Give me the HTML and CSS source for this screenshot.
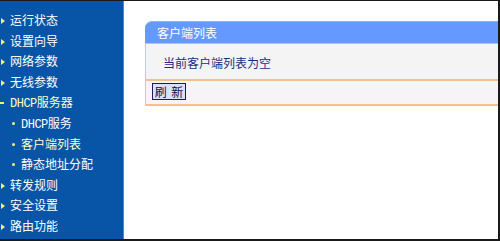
FILE: index.html
```html
<!DOCTYPE html>
<html lang="zh">
<head>
<meta charset="utf-8">
<title>客户端列表</title>
<link rel="stylesheet" href="styles.css">
</head>
<body>
<div class="frame">
  <nav class="sidebar">
    <div class="item top">运行状态</div>
    <div class="item top">设置向导</div>
    <div class="item top">网络参数</div>
    <div class="item top">无线参数</div>
    <div class="item open hl"><span class="latin">DHCP</span>服务器</div>
    <div class="item sub"><span class="latin">DHCP</span>服务</div>
    <div class="item sub hl">客户端列表</div>
    <div class="item sub">静态地址分配</div>
    <div class="item top">转发规则</div>
    <div class="item top">安全设置</div>
    <div class="item top">路由功能</div>
  </nav>
  <main class="main">
    <section class="panel">
      <div class="panel-head">客户端列表</div>
      <div class="panel-body">当前客户端列表为空</div>
      <div class="panel-foot"><button class="btn" type="button">刷 新</button></div>
    </section>
  </main>
</div>
</body>
</html>
```
FILE: styles.css
```css
* { box-sizing: border-box; }
html, body { margin: 0; padding: 0; background: #ffffff; }
body { font-family: "Noto Sans CJK SC", "DejaVu Sans", sans-serif; font-size: 12px; }

.frame {
  width: 500px;
  height: 241px;
  display: flex;
  border-top: 1px solid #1a1a1a;
  border-right: 2px solid #1a1a1a;
  border-bottom: 2px solid #1a1a1a;
  overflow: hidden;
}

.sidebar {
  width: 124px;
  flex: none;
  background: #0854a6;
  border-right: 1px solid #4f86c8;
  padding-top: 9px;
  display: flex;
  flex-direction: column;
}

.item {
  height: 20.6px;
  line-height: 20.6px;
  color: #ffffff;
  font-size: 12px;
  position: relative;
  padding-left: 10px;
  white-space: nowrap;
}
.item.hl { color: #ffffcc; }
.item .latin { font-family: "Liberation Mono", "DejaVu Sans Mono", monospace; font-size: 12px; letter-spacing: -0.5px; }

.item.top::before {
  content: "";
  position: absolute;
  left: 1px;
  top: 8px;
  border-left: 4px solid #f6f07a;
  border-top: 3px solid transparent;
  border-bottom: 3px solid transparent;
}
.item.open::before {
  content: "";
  position: absolute;
  left: 0;
  top: 10px;
  width: 4px;
  height: 2px;
  background: #f6f07a;
}
.item.sub { padding-left: 21px; }
.item.sub::before {
  content: "";
  position: absolute;
  left: 12px;
  top: 9px;
  width: 3px;
  height: 3px;
  border-radius: 50%;
  background: #f6f07a;
}

.main {
  flex: 1;
  padding: 20px 0 0 21px;
  overflow: hidden;
}

.panel { width: 420px; }

.panel-head {
  height: 22px;
  line-height: 21px;
  background: #6699ff;
  border-top: 1px solid #8fb4ff;
  border-top-left-radius: 7px;
  color: #ffffff;
  padding-left: 12px;
  font-size: 12px;
}

.panel-body {
  height: 38px;
  line-height: 38px;
  background: #f4f4f4;
  border-left: 1px solid #f5c08a;
  border-right: 1px solid #f5c08a;
  border-top: 1px solid #a9c4ff;
  border-bottom: 2px solid #f5c08a;
  color: #1c2c84;
  padding-left: 17px;
  font-size: 12px;
}

.panel-foot {
  height: 25px;
  background: #f6f4f6;
  border-left: 1px solid #f5c08a;
  border-right: 1px solid #f5c08a;
  border-bottom: 2px solid #f5c08a;
  padding: 2px 0 0 6px;
}

.btn {
  display: block;
  width: 34px;
  height: 17px;
  padding: 0;
  margin: 0;
  border: 1px solid #1a1a60;
  background: #dde0f8;
  color: #101040;
  font-family: "Noto Sans CJK SC", sans-serif;
  font-size: 12px;
  line-height: 15px;
  text-align: center;
  word-spacing: 2px;
}
```
